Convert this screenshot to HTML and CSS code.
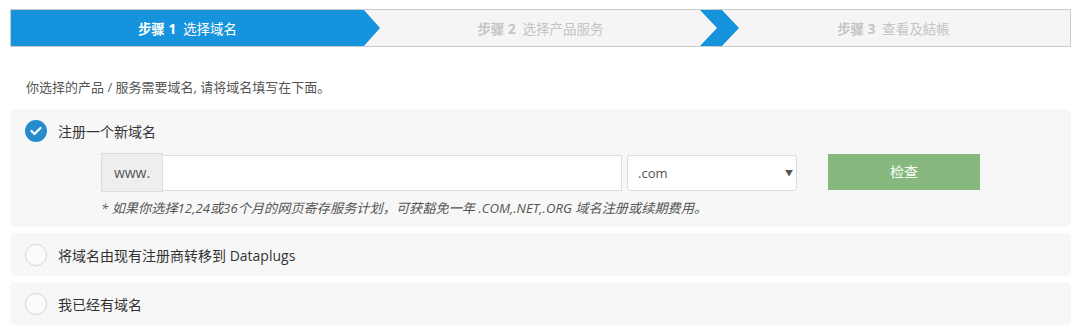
FILE: index.html
```html
<!DOCTYPE html>
<html lang="zh">

<head>
    <meta charset="UTF-8">
    <title>选择域名</title>
    <link rel="stylesheet" href="styles.css">
</head>

<body>
    <div class="container">
        <!-- order steps -->
        <div class="steps">
            <div class="step step-active">
                <b>步骤 1</b>&nbsp; 选择域名
                <svg class="arrow" width="22" height="36" viewBox="0 0 22 36"><polygon points="0,0 6,0 22,18 6,36 0,36" fill="#1693dd"/></svg>
            </div>
            <div class="step">
                <b>步骤 2</b>&nbsp; 选择产品服务
                <svg class="chevron" width="39" height="36" viewBox="0 0 39 36"><polygon points="0,0 22,0 39,18 22,36 0,36 17,18" fill="#1693dd"/></svg>
            </div>
            <div class="step">
                <b>步骤 3</b>&nbsp; 查看及結帳
            </div>
        </div>

        <p class="intro">你选择的产品 / 服务需要域名, 请将域名填写在下面。</p>

        <div class="option">
            <div class="option-head">
                <span class="radio radio-checked">
                    <svg width="12" height="10" viewBox="0 0 12 10"><polyline points="1.5,5 4.5,8 10.5,2" fill="none" stroke="#fff" stroke-width="2.2" stroke-linecap="round" stroke-linejoin="round"/></svg>
                </span>
                注册一个新域名
            </div>
            <div class="domain-row">
                <span class="addon">www.</span>
                <input type="text" class="domain-input">
                <div class="select-wrap">
                    <select class="tld">
                        <option>.com</option>
                    </select>
                    <span class="caret">▼</span>
                </div>
                <a href="#" class="button-check">检查</a>
            </div>
            <p class="note">* 如果你选择12,24或36个月的网页寄存服务计划，可获豁免一年 .COM,.NET,.ORG 域名注册或续期费用。</p>
        </div>

        <div class="option">
            <div class="option-head">
                <span class="radio"></span>
                将域名由现有注册商转移到 Dataplugs
            </div>
        </div>

        <div class="option">
            <div class="option-head">
                <span class="radio"></span>
                我已经有域名
            </div>
        </div>
    </div>
</body>

</html>
```

FILE: styles.css
```css
body {
    margin: 0;
    padding: 0;
    background-color: #fff;
    color: #333;
    font-family: "Open Sans", "Noto Sans CJK SC", sans-serif;
    font-size: 13px;
}

.container {
    margin: 9px 12px 0 10px;
}

.steps {
    display: flex;
    height: 36px;
    border: 1px solid #ccc;
    background-color: #f5f5f5;
}

.step {
    position: relative;
    flex: 1;
    display: flex;
    align-items: center;
    justify-content: center;
    color: #c4c4c4;
    font-size: 13.5px;
}

.step b {
    font-weight: bold;
}

.step-active {
    background-color: #1693dd;
    color: #fff;
}

.arrow {
    position: absolute;
    top: 0;
    left: 100%;
    margin-left: -6px;
    z-index: 1;
}

.chevron {
    position: absolute;
    top: 0;
    left: 100%;
    margin-left: -17px;
    z-index: 1;
}

.intro {
    margin: 31px 0 0 16px;
    font-size: 13px;
    line-height: 18px;
    color: #555;
}

.option {
    background-color: #f7f7f7;
    border-radius: 5px;
    padding: 11px 15px 10px;
    margin-top: 6px;
}

.intro + .option {
    margin-top: 13px;
}

.option-head {
    display: flex;
    align-items: center;
    gap: 11px;
    height: 22px;
    color: #333;
    font-size: 14px;
}

.radio {
    width: 20px;
    height: 20px;
    border: 1px solid #d6d6d6;
    border-radius: 50%;
    background-color: #fbfbfb;
    display: flex;
    align-items: center;
    justify-content: center;
}

.radio-checked {
    width: 22px;
    height: 22px;
    border: none;
    background-color: #268bcc;
}

.domain-row {
    display: flex;
    align-items: center;
    margin: 11px 0 0 76px;
}

.addon {
    box-sizing: border-box;
    width: 62px;
    height: 39px;
    line-height: 37px;
    text-align: center;
    background-color: #eee;
    border: 1px solid #ddd;
    color: #555;
    font-size: 14px;
}

.domain-input {
    box-sizing: border-box;
    width: 459px;
    height: 36px;
    border: 1px solid #ddd;
    border-left: none;
    background-color: #fff;
    margin: 0;
    padding: 0 10px;
}

.select-wrap {
    position: relative;
    margin-left: 5px;
}

.tld {
    box-sizing: border-box;
    display: block;
    width: 170px;
    height: 36px;
    border: 1px solid #ddd;
    border-radius: 3px;
    background-color: #fff;
    appearance: none;
    padding: 0 10px;
    font-family: "Open Sans", sans-serif;
    font-size: 13px;
    color: #555;
}

.caret {
    position: absolute;
    right: 4px;
    top: 12px;
    font-size: 8px;
    color: #555;
}

.button-check {
    display: block;
    width: 152px;
    height: 36px;
    line-height: 36px;
    margin: -2px 0 0 31px;
    background-color: #87b97f;
    color: #fff;
    text-align: center;
    text-decoration: none;
    font-size: 14px;
}

.note {
    margin: 7px 0 0 76px;
    font-size: 13.2px;
    line-height: 18px;
    font-style: italic;
    color: #555;
}
```
